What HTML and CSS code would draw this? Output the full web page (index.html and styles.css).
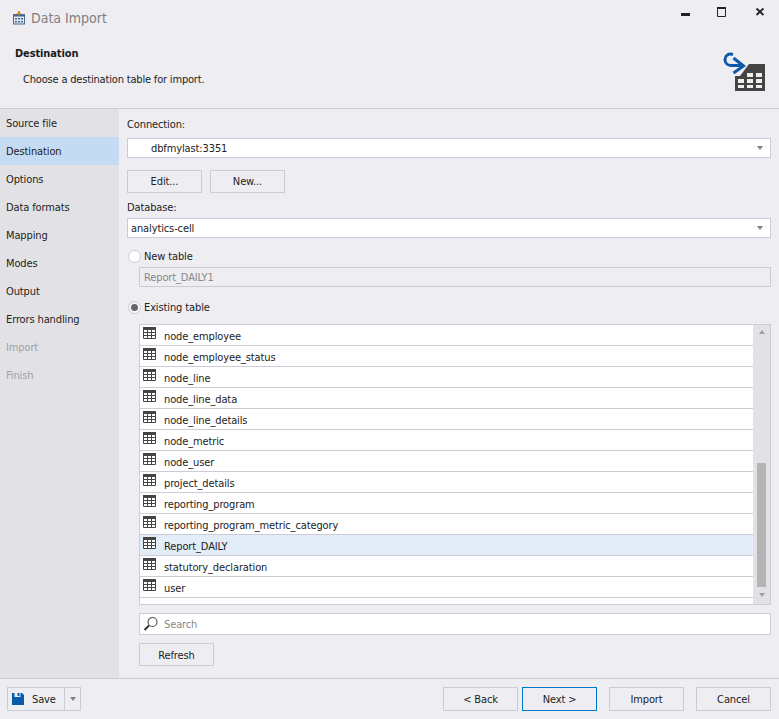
FILE: index.html
```html
<!DOCTYPE html>
<html lang="en">
<head>
    <meta charset="UTF-8">
    <meta name="viewport" content="width=device-width, initial-scale=1.0">
    <title>Data Import</title>
    <link rel="stylesheet" href="styles.css">
</head>
<body>
    <!-- Title bar -->
    <div class="titlebar">
        <svg class="app-icon" width="14" height="14" viewBox="0 0 14 14">
            <rect x="1.500" y="3.500" width="11" height="9.500" fill="#dfe6f0" stroke="#4a6a90"/>
            <rect x="1" y="3" width="12" height="2.500" fill="#4a6a90"/>
            <path d="M3 7h2v1.500H3zM6 7h2v1.500H6zM9 7h2v1.500H9zM3 10h2v1.500H3zM6 10h2v1.500H6zM9 10h2v1.500H9z" fill="#4a6a90"/>
            <path d="M6 0h2v2h1.500L7 4.500 4.500 2H6z" fill="#d98a1e"/>
        </svg>
        <span class="app-title">Data Import</span>
        <div class="window-controls">
            <svg width="12" height="12" viewBox="0 0 12 12"><rect x="1" y="7" width="9" height="3" fill="#222"/></svg>
            <svg width="12" height="12" viewBox="0 0 12 12"><path d="M.5 2v8.500h8V2z" fill="none" stroke="#222"/><rect x="0" y="1" width="9" height="2" fill="#222"/></svg>
            <svg width="12" height="12" viewBox="0 0 12 12"><path d="M2.500 2.500l7 6.500M9.500 2.500l-7 6.500" stroke="#222" stroke-width="1.800"/></svg>
        </div>
    </div>

    <!-- Header -->
    <header class="header">
        <div>
            <h1>Destination</h1>
            <p>Choose a destination table for import.</p>
        </div>
        <svg class="header-icon" width="46" height="46" viewBox="0 0 46 46">
            <path d="M26 14h16v27H12V26h5z" fill="#444"/>
            <path d="M10 4.500C5 3 2 6 2 9.500S4.500 15.500 8 15.500H20" fill="none" stroke="#0a5aa8" stroke-width="3"/>
            <path d="M10.500 8l10 8-10 7" fill="none" stroke="#0a5aa8" stroke-width="3"/>
            <path d="M24 23h6v4h-6zM33 23h6v4h-6zM15 29h6v4h-6zM24 29h6v4h-6zM33 29h6v4h-6zM15 35h6v3h-6zM24 35h6v3h-6zM33 35h6v3h-6z" fill="#eee"/>
        </svg>
    </header>

    <div class="main">
        <!-- Steps -->
        <nav class="sidebar">
            <div class="step">Source file</div>
            <div class="step active">Destination</div>
            <div class="step">Options</div>
            <div class="step">Data formats</div>
            <div class="step">Mapping</div>
            <div class="step">Modes</div>
            <div class="step">Output</div>
            <div class="step">Errors handling</div>
            <div class="step disabled">Import</div>
            <div class="step disabled">Finish</div>
        </nav>

        <!-- Page content -->
        <section class="content">
            <label class="field-label">Connection:</label>
            <div class="combo connection">
                <span>dbfmylast:3351</span>
                <i class="arrow-down"></i>
            </div>
            <div class="button-row">
                <button class="btn">Edit...</button>
                <button class="btn">New...</button>
            </div>
            <label class="field-label db-label">Database:</label>
            <div class="combo">
                <span>analytics-cell</span>
                <i class="arrow-down"></i>
            </div>

            <div class="radio-row first">
                <span class="radio"></span>
                <span>New table</span>
            </div>
            <div class="text-input disabled-input">Report_DAILY1</div>
            <div class="radio-row second">
                <span class="radio checked"></span>
                <span>Existing table</span>
            </div>

            <div class="table-list">
                <div class="rows" id="rows"></div>
                <div class="scrollbar">
                    <i class="arrow-up"></i>
                    <div class="thumb"></div>
                    <i class="arrow-down dark"></i>
                </div>
            </div>

            <div class="text-input search">
                <svg width="16" height="16" viewBox="0 0 16 16">
                    <circle cx="9.500" cy="6" r="4.500" fill="none" stroke="#555" stroke-width="1.200"/>
                    <path d="M6 9.500L1.500 14" stroke="#333" stroke-width="2"/>
                </svg>
                <span>Search</span>
            </div>
            <button class="btn refresh">Refresh</button>
        </section>
    </div>

    <!-- Footer -->
    <footer class="footer">
        <div class="split-btn">
            <div class="split-main">
                <svg width="14" height="14" viewBox="0 0 14 14">
                    <path d="M1 1h2.500v4h6V1H11l2 2v10H1z" fill="#0a5aa8"/>
                    <rect x="6.500" y="1" width="2" height="3" fill="#0a5aa8"/>
                </svg>
                <span>Save</span>
            </div>
            <div class="split-drop"><i class="arrow-down"></i></div>
        </div>
        <div class="nav-buttons">
            <button class="btn">&lt; Back</button>
            <button class="btn default">Next &gt;</button>
            <button class="btn gap-left">Import</button>
            <button class="btn gap-left">Cancel</button>
        </div>
    </footer>

    <script>
        // Fill the table list
        const tables = [
            'node_employee', 'node_employee_status', 'node_line', 'node_line_data',
            'node_line_details', 'node_metric', 'node_user', 'project_details',
            'reporting_program', 'reporting_program_metric_category', 'Report_DAILY',
            'statutory_declaration', 'user'
        ];
        const icon = `<svg width="13" height="12" viewBox="0 0 13 12">
            <path d="M.5.500h12v11H.5z" fill="#fff" stroke="#444"/>
            <path d="M0 0h13v3H0z" fill="#444"/>
            <path d="M0 5.500h13M0 8.500h13M4.500 3v9M8.500 3v9" stroke="#444" fill="none"/>
        </svg>`;
        const rows = document.getElementById('rows');
        tables.forEach(name => {
            const selected = name === 'Report_DAILY' ? ' selected' : '';
            rows.innerHTML += `<div class="row${selected}">${icon}<span>${name}</span></div>`;
        });
    </script>
</body>
</html>
```

FILE: styles.css
```css
/* General Styling */
* {
    margin: 0;
    padding: 0;
    box-sizing: border-box;
}
html, body {
    height: 100%;
}
body {
    display: flex;
    flex-direction: column;
    font-family: "DejaVu Sans", sans-serif;
    font-stretch: condensed;
    font-size: 11px;
    letter-spacing: -0.12px;
    background-color: #eeeef2;
    color: #222;
    overflow: hidden;
}

/* Title bar */
.titlebar {
    display: flex;
    align-items: center;
    height: 36px;
    padding-left: 12px;
}
.app-icon {
    margin-right: 5px;
}
.app-title {
    font-size: 14px;
    letter-spacing: 0;
    color: #808080;
}
.window-controls {
    display: flex;
    margin-left: auto;
    gap: 24px;
    padding-right: 13px;
    margin-top: -13px;
    align-items: center;
}
.window-controls svg {
    display: block;
}
.window-controls svg:nth-child(1) {
    margin-right: 1px;
}
.window-controls svg:nth-child(2) {
    margin-right: 1px;
}

/* Header */
.header {
    display: flex;
    justify-content: space-between;
    height: 73px;
    padding: 11px 10px 0 15px;
    border-bottom: 1px solid #ccccd8;
}
.header h1 {
    font-size: 11px;
    font-weight: bold;
    line-height: 13px;
    color: #1a1a1a;
}
.header p {
    margin: 13px 0 0 8px;
    line-height: 13px;
    letter-spacing: -0.18px;
}
.header-icon {
    margin-top: 3px;
}

.main {
    flex: 1;
    display: flex;
    min-height: 0;
}

/* Steps */
.sidebar {
    width: 119px;
    background-color: #e2e2e6;
}
.step {
    height: 28px;
    line-height: 28px;
    padding: 1px 0 0 6px;
}
.step.active {
    background-color: #c5daf3;
}
.step.disabled {
    color: #a0a0a0;
}

/* Page content */
.content {
    flex: 1;
    display: flex;
    flex-direction: column;
    align-items: flex-start;
    padding: 9px 8px 0 8px;
}
.field-label {
    display: block;
    line-height: 14px;
}
.db-label {
    margin-top: 8px;
}
.combo {
    display: flex;
    align-items: center;
    justify-content: space-between;
    width: 100%;
    height: 20px;
    margin-top: 3px;
    padding: 0 7px 0 3px;
    background-color: #fff;
    border: 1px solid #ccccd8;
}
.connection {
    margin-top: 6px;
    padding-left: 23px;
}
.button-row {
    display: flex;
    gap: 8px;
    margin-top: 12px;
}
.btn {
    width: 75px;
    height: 23px;
    font-family: inherit;
    font-stretch: inherit;
    font-size: 11px;
    letter-spacing: inherit;
    color: #222;
    background-color: #eeeef2;
    border: 1px solid #ccccd8;
}
.arrow-down, .arrow-up {
    display: block;
    width: 0;
    height: 0;
    border-left: 3.5px solid transparent;
    border-right: 3.5px solid transparent;
}
.arrow-down {
    border-top: 4px solid #808080;
}
.arrow-up {
    border-bottom: 4px solid #a0a0a0;
}
.arrow-down.dark {
    border-top-color: #a0a0a0;
}

/* Radios */
.radio-row {
    display: flex;
    align-items: center;
    gap: 3px;
    margin-left: 1px;
    height: 16px;
}
.radio-row.first {
    margin-top: 10px;
}
.radio-row.second {
    margin-top: 12px;
}
.radio {
    width: 13px;
    height: 13px;
    background-color: #fff;
    border: 1px solid #ccccd8;
    border-radius: 50%;
}
.radio.checked {
    background-color: #666;
    border: 2px solid #f6f6f8;
    box-shadow: 0 0 0 1px #ccccd8;
    width: 11px;
    height: 11px;
    margin: 1px;
}
.text-input {
    display: flex;
    align-items: center;
    width: 632px;
    height: 20px;
    margin: 3px 0 0 12px;
    padding-left: 4px;
    background-color: #fff;
    border: 1px solid #ccccd8;
}
.disabled-input {
    background-color: #eeeef2;
    color: #888;
}

/* Table list */
.table-list {
    display: flex;
    flex-shrink: 0;
    width: 632px;
    height: 281px;
    margin: 9px 0 0 12px;
    background-color: #fff;
    border: 1px solid #ccccd8;
}
.rows {
    flex: 1;
}
.row {
    display: flex;
    align-items: center;
    height: 21px;
    padding: 0 0 2px 3px;
    border-bottom: 1px solid #ccccd8;
}
.row svg {
    display: block;
    margin-top: -2px;
}
.row span {
    margin-left: 8px;
    position: relative;
    top: 2px;
}
.row.selected {
    background-color: #e2edf8;
}
.scrollbar {
    display: flex;
    flex-direction: column;
    align-items: center;
    width: 17px;
    padding-top: 5px;
    background-color: #e2e2e6;
}
.thumb {
    width: 9px;
    height: 124px;
    margin: 129px 0 6px;
    background-color: #b4b4b4;
}

.text-input.search {
    height: 22px;
    margin-top: 8px;
    padding-left: 3px;
    color: #888;
    gap: 5px;
}
.refresh {
    margin: 8px 0 0 12px;
    padding-top: 1px;
}

/* Footer */
.footer {
    display: flex;
    justify-content: space-between;
    align-items: flex-start;
    height: 41px;
    padding: 8px 8px 0 7px;
    border-top: 1px solid #ccccd8;
}
.split-btn {
    display: flex;
    height: 24px;
    border: 1px solid #ccccd8;
}
.split-main {
    display: flex;
    align-items: center;
    width: 57px;
    padding-left: 3px;
    gap: 7px;
    border-right: 1px solid #ccccd8;
}
.split-drop {
    display: flex;
    align-items: center;
    justify-content: center;
    width: 15px;
}
.nav-buttons {
    display: flex;
    gap: 4px;
}
.nav-buttons .btn {
    height: 24px;
}
.btn.default {
    border-color: #0078c8;
}
.btn.gap-left {
    margin-left: 8px;
}
```
